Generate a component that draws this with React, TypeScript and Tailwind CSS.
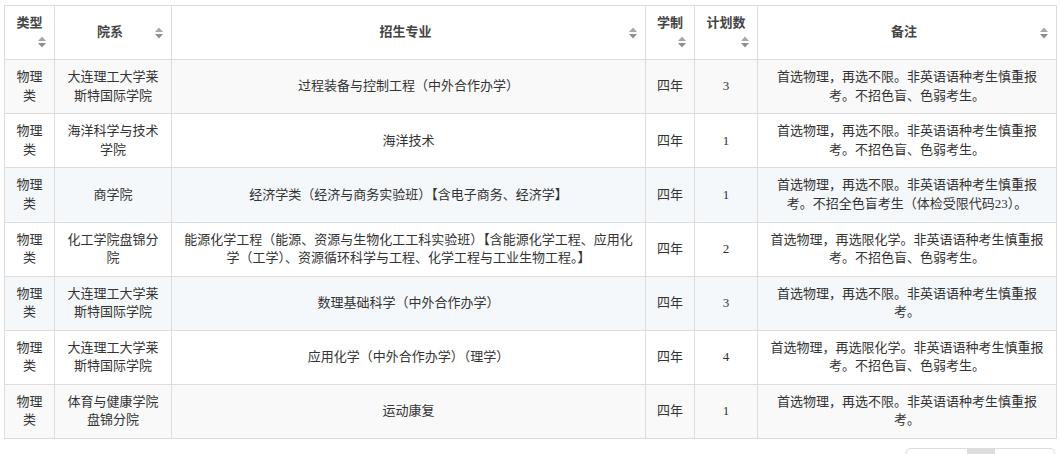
import React from "react";

const rows = [
  {
    type: "物理类",
    dept: "大连理工大学莱斯特国际学院",
    major: "过程装备与控制工程（中外合作办学）",
    years: "四年",
    plan: "3",
    note: "首选物理，再选不限。非英语语种考生慎重报考。不招色盲、色弱考生。",
    bg: "bg-[#f9f9f9]",
  },
  {
    type: "物理类",
    dept: "海洋科学与技术学院",
    major: "海洋技术",
    years: "四年",
    plan: "1",
    note: "首选物理，再选不限。非英语语种考生慎重报考。不招色盲、色弱考生。",
    bg: "bg-white",
  },
  {
    type: "物理类",
    dept: "商学院",
    major: "经济学类（经济与商务实验班）【含电子商务、经济学】",
    years: "四年",
    plan: "1",
    note: "首选物理，再选不限。非英语语种考生慎重报考。不招全色盲考生（体检受限代码23）。",
    bg: "bg-[#f5f8fa]",
  },
  {
    type: "物理类",
    dept: "化工学院盘锦分院",
    major:
      "能源化学工程（能源、资源与生物化工工科实验班）【含能源化学工程、应用化学（工学）、资源循环科学与工程、化学工程与工业生物工程。】",
    years: "四年",
    plan: "2",
    note: "首选物理，再选限化学。非英语语种考生慎重报考。不招色盲、色弱考生。",
    bg: "bg-white",
  },
  {
    type: "物理类",
    dept: "大连理工大学莱斯特国际学院",
    major: "数理基础科学（中外合作办学）",
    years: "四年",
    plan: "3",
    note: "首选物理，再选不限。非英语语种考生慎重报考。",
    bg: "bg-[#f5f8fa]",
  },
  {
    type: "物理类",
    dept: "大连理工大学莱斯特国际学院",
    major: "应用化学（中外合作办学）（理学）",
    years: "四年",
    plan: "4",
    note: "首选物理，再选限化学。非英语语种考生慎重报考。不招色盲、色弱考生。",
    bg: "bg-white",
  },
  {
    type: "物理类",
    dept: "体育与健康学院盘锦分院",
    major: "运动康复",
    years: "四年",
    plan: "1",
    note: "首选物理，再选不限。非英语语种考生慎重报考。",
    bg: "bg-[#f9f9f9]",
  },
];

function SortIcon() {
  return (
    <svg width="8" height="12" viewBox="0 0 8 12" className="shrink-0">
      <polygon points="4,0.5 8,5 0,5" fill="#a8a8a8" />
      <polygon points="0,7 8,7 4,11.5" fill="#8f8f8f" />
    </svg>
  );
}

function NarrowTh({ label }: { label: string }) {
  return (
    <th className="border border-[#ddd] px-2 py-2 align-middle font-bold text-[#444]">
      <div className="text-center">{label}</div>
      <div className="flex h-[18.57px] items-center justify-end">
        <SortIcon />
      </div>
    </th>
  );
}

function WideTh({ label }: { label: string }) {
  return (
    <th className="relative border border-[#ddd] py-2 pl-2 pr-[14px] align-middle font-bold text-[#444]">
      <div className="text-center">{label}</div>
      <div className="absolute right-2 top-1/2 flex -translate-y-1/2">
        <SortIcon />
      </div>
    </th>
  );
}

export default function App() {
  return (
    <div
      className="min-h-[454px] bg-white px-1 pt-[5px] text-[13px] leading-[1.42857] text-[#333]"
      style={{ fontFamily: '"Liberation Serif", "Noto Sans CJK SC", serif' }}
    >
      <table className="w-[1052px] table-fixed border-collapse border border-[#ddd]">
        <colgroup>
          <col className="w-[50px]" />
          <col className="w-[117px]" />
          <col className="w-[474px]" />
          <col className="w-[49px]" />
          <col className="w-[63px]" />
          <col className="w-[299px]" />
        </colgroup>
        <thead>
          <tr>
            <NarrowTh label="类型" />
            <WideTh label="院系" />
            <WideTh label="招生专业" />
            <NarrowTh label="学制" />
            <NarrowTh label="计划数" />
            <WideTh label="备注" />
          </tr>
        </thead>
        <tbody>
          {rows.map((r, i) => (
            <tr key={i} className={r.bg}>
              <td className="border border-[#ddd] p-2 text-center align-middle">{r.type}</td>
              <td className="border border-[#ddd] p-2 text-center align-middle">{r.dept}</td>
              <td className="border border-[#ddd] p-2 text-center align-middle">{r.major}</td>
              <td className="border border-[#ddd] p-2 text-center align-middle">{r.years}</td>
              <td className="border border-[#ddd] p-2 text-center align-middle">{r.plan}</td>
              <td className="border border-[#ddd] p-2 text-center align-middle">{r.note}</td>
            </tr>
          ))}
        </tbody>
      </table>

      {/* pagination, only its top edge is in view */}
      <div className="mt-[9px] flex justify-end pr-[1px]">
        <ul className="flex overflow-hidden rounded-[4px] border border-[#ddd]">
          <li aria-label="上一页" className="h-[34px] w-[60px]" />
          <li aria-label="1" className="h-[34px] w-[28px] border-x border-[#ddd] bg-[#ddd]" />
          <li aria-label="下一页" className="h-[34px] w-[59px]" />
        </ul>
      </div>
    </div>
  );
}
